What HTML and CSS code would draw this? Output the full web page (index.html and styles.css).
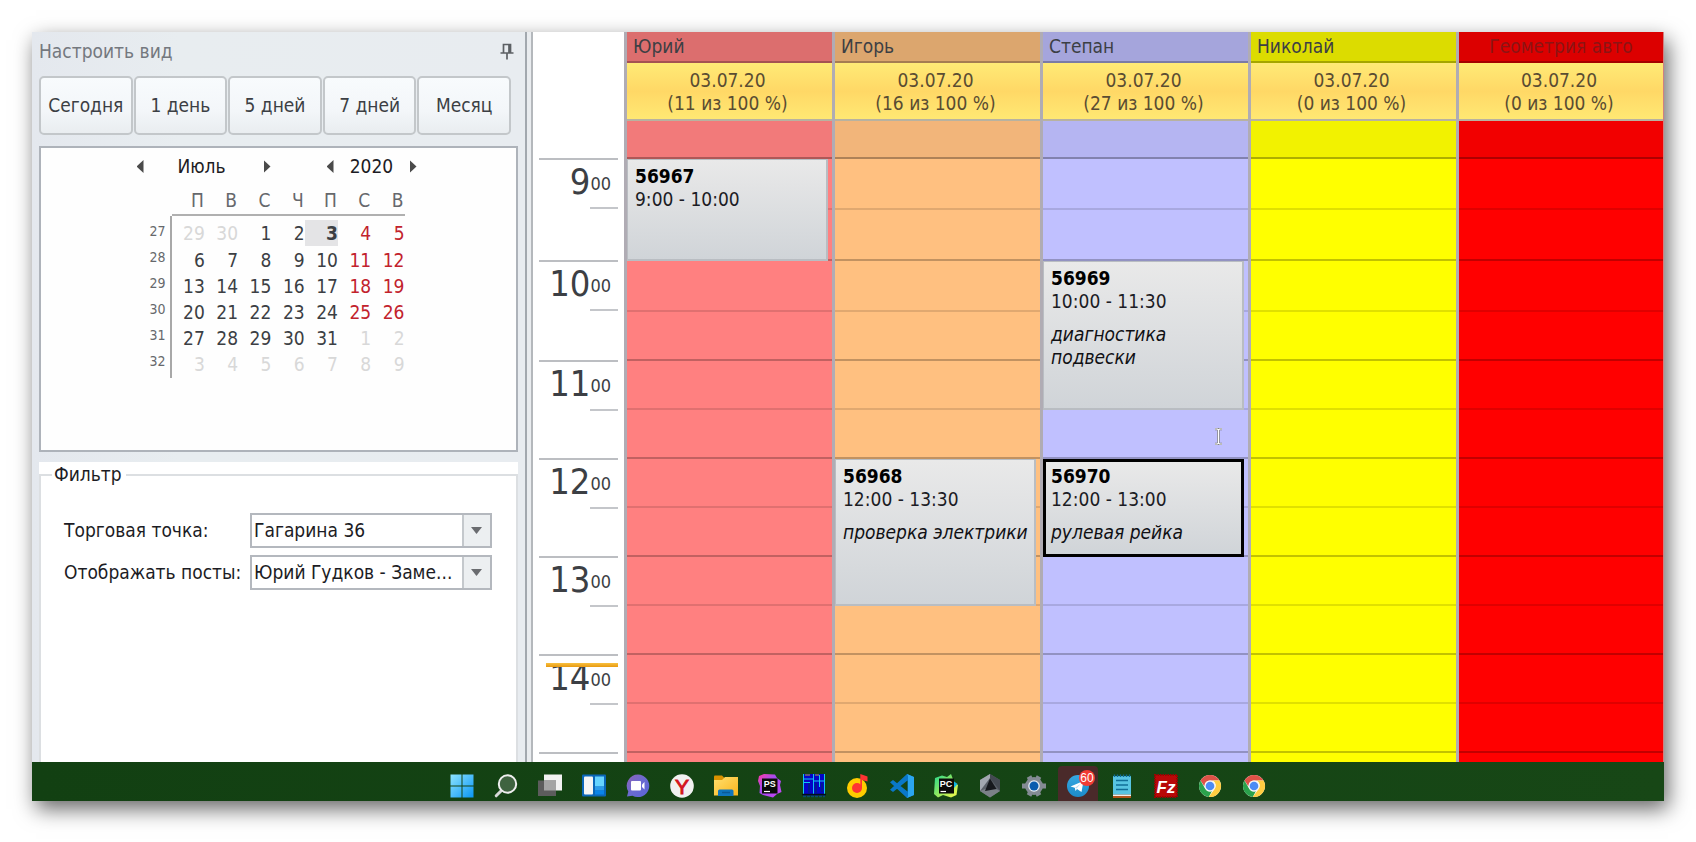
FILE: index.html
```html
<!DOCTYPE html>
<html lang="ru">
<head>
<meta charset="utf-8">
<title>Расписание постов</title>
<link rel="stylesheet" href="styles.css">
</head>
<body>
<div class="window">
  <main class="workspace">
    <aside class="sidebar">
      <header class="sidebar-head">
        <h1 class="sidebar-title">Настроить вид</h1>
        <button class="pin" type="button" aria-label="Закрепить">
          <svg width="14" height="17" viewBox="0 0 14 17"><path d="M3.500 9.500V1.500H10.500V9.500M9 2V9.500M0.500 10H13.500M7 10V16.500" fill="none" stroke="#5c6064" stroke-width="1.700"/></svg>
        </button>
      </header>
      <nav class="ranges">
        <button class="range" type="button">Сегодня</button>
        <button class="range" type="button">1 день</button>
        <button class="range" type="button">5 дней</button>
        <button class="range" type="button">7 дней</button>
        <button class="range" type="button">Месяц</button>
      </nav>
      <section class="calendar">
        <div class="calendar-nav">
          <div class="stepper stepper-month">
            <button class="arrow arrow-prev" type="button" aria-label="Предыдущий месяц"></button>
            <span>Июль</span>
            <button class="arrow arrow-next" type="button" aria-label="Следующий месяц"></button>
          </div>
          <div class="stepper stepper-year">
            <button class="arrow arrow-prev" type="button" aria-label="Предыдущий год"></button>
            <span>2020</span>
            <button class="arrow arrow-next" type="button" aria-label="Следующий год"></button>
          </div>
        </div>
        <table class="month">
          <thead><tr><td></td><th>П</th><th>В</th><th>С</th><th>Ч</th><th>П</th><th>С</th><th>В</th></tr></thead>
          <tbody>
            <tr><th>27</th><td class="out">29</td><td class="out">30</td><td>1</td><td>2</td><td class="today">3</td><td class="rest">4</td><td class="rest">5</td></tr>
            <tr><th>28</th><td>6</td><td>7</td><td>8</td><td>9</td><td>10</td><td class="rest">11</td><td class="rest">12</td></tr>
            <tr><th>29</th><td>13</td><td>14</td><td>15</td><td>16</td><td>17</td><td class="rest">18</td><td class="rest">19</td></tr>
            <tr><th>30</th><td>20</td><td>21</td><td>22</td><td>23</td><td>24</td><td class="rest">25</td><td class="rest">26</td></tr>
            <tr><th>31</th><td>27</td><td>28</td><td>29</td><td>30</td><td>31</td><td class="out">1</td><td class="out">2</td></tr>
            <tr><th>32</th><td class="out">3</td><td class="out">4</td><td class="out">5</td><td class="out">6</td><td class="out">7</td><td class="out">8</td><td class="out">9</td></tr>
          </tbody>
        </table>
      </section>
      <section class="filter">
        <fieldset class="filter-box">
          <legend>Фильтр</legend>
          <div class="fields">
            <label for="shop">Торговая точка:</label>
            <div class="combo"><select id="shop"><option>Гагарина 36</option></select></div>
            <label for="posts">Отображать посты:</label>
            <div class="combo"><select id="posts"><option>Юрий Гудков - Заме...</option></select></div>
          </div>
        </fieldset>
      </section>
    </aside>
    <div class="splitter"></div>
    <div class="ruler">
      <div class="hour h9"><span>9</span><small>00</small></div>
      <div class="hour h10"><span>10</span><small>00</small></div>
      <div class="hour"><span>11</span><small>00</small></div>
      <div class="hour"><span>12</span><small>00</small></div>
      <div class="hour"><span>13</span><small>00</small></div>
      <div class="hour now"><span>14</span><small>00</small></div>
      <div class="hour"><span>15</span><small>00</small></div>
    </div>
    <div class="posts">
      <section class="post post-rose">
        <h2 class="post-name">Юрий</h2>
        <div class="post-date">03.07.20<br>(11 из 100 %)</div>
        <div class="allday"></div>
        <div class="slots">
          <i></i><i></i><i></i><i></i><i></i><i></i><i></i><i></i><i></i><i></i><i></i><i></i><i></i>
          <article class="job job-9-10"><b>56967</b><span>9:00 - 10:00</span></article>
        </div>
      </section>
      <section class="post post-peach">
        <h2 class="post-name">Игорь</h2>
        <div class="post-date">03.07.20<br>(16 из 100 %)</div>
        <div class="allday"></div>
        <div class="slots">
          <i></i><i></i><i></i><i></i><i></i><i></i><i></i><i></i><i></i><i></i><i></i><i></i><i></i>
          <article class="job job-12-1330"><b>56968</b><span>12:00 - 13:30</span><em>проверка электрики</em></article>
        </div>
      </section>
      <section class="post post-lilac">
        <h2 class="post-name">Степан</h2>
        <div class="post-date">03.07.20<br>(27 из 100 %)</div>
        <div class="allday"></div>
        <div class="slots">
          <i></i><i></i><i></i><i></i><i></i><i class="hovered"><svg width="9" height="17" viewBox="0 0 9 17"><path d="M1 1H3.500L4.500 2L5.500 1H8M4.500 2V15M1 16H3.500L4.500 15L5.500 16H8" fill="none" stroke="#777" stroke-width="2.500"/><path d="M1 1H3.500L4.500 2L5.500 1H8M4.500 2V15M1 16H3.500L4.500 15L5.500 16H8" fill="none" stroke="#fff" stroke-width="1.200"/></svg></i><i></i><i></i><i></i><i></i><i></i><i></i><i></i>
          <article class="job job-10-1130"><b>56969</b><span>10:00 - 11:30</span><em>диагностика подвески</em></article>
          <article class="job job-12-13 selected"><b>56970</b><span>12:00 - 13:00</span><em>рулевая рейка</em></article>
        </div>
      </section>
      <section class="post post-yellow">
        <h2 class="post-name">Николай</h2>
        <div class="post-date">03.07.20<br>(0 из 100 %)</div>
        <div class="allday"></div>
        <div class="slots">
          <i></i><i></i><i></i><i></i><i></i><i></i><i></i><i></i><i></i><i></i><i></i><i></i><i></i>
        </div>
      </section>
      <section class="post post-red">
        <h2 class="post-name">Геометрия авто</h2>
        <div class="post-date">03.07.20<br>(0 из 100 %)</div>
        <div class="allday"></div>
        <div class="slots">
          <i></i><i></i><i></i><i></i><i></i><i></i><i></i><i></i><i></i><i></i><i></i><i></i><i></i>
        </div>
      </section>
    </div>
  </main>

  <footer class="taskbar">
    <svg width="0" height="0" class="defs">
      <defs>
        <linearGradient id="win" x1="0" y1="0" x2="1" y2="1"><stop offset="0" stop-color="#8ee4ff"/><stop offset="1" stop-color="#0a96f5"/></linearGradient>
        <linearGradient id="chat" x1="0" y1="0" x2="1" y2="1"><stop offset="0" stop-color="#8d62b8"/><stop offset=".5" stop-color="#6a6bd0"/><stop offset="1" stop-color="#5a62d8"/></linearGradient>
        <linearGradient id="dir" x1="0" y1="0" x2="1" y2="1"><stop offset="0" stop-color="#ffdf6e"/><stop offset="1" stop-color="#f9b51c"/></linearGradient>
        <linearGradient id="ps" x1="0" y1="0" x2="1" y2="1"><stop offset="0" stop-color="#ff3aa0"/><stop offset=".4" stop-color="#a44cf0"/><stop offset="1" stop-color="#c845f5"/></linearGradient>
        <linearGradient id="pc" x1="0" y1="0" x2="1" y2="1"><stop offset="0" stop-color="#22d88f"/><stop offset=".5" stop-color="#8ee860"/><stop offset="1" stop-color="#fcf84a"/></linearGradient>
        <linearGradient id="tg" x1="0" y1="0" x2="0" y2="1"><stop offset="0" stop-color="#36a9e2"/><stop offset="1" stop-color="#1c8bc9"/></linearGradient>
        <symbol id="chrome" viewBox="0 0 24 24">
          <circle cx="12" cy="12" r="11" fill="#fff"/>
          <path d="M2.500 6.500A11 11 0 0 1 21.500 6.500H12A5.500 5.500 0 0 0 7 9.500L6.500 12.500Z" fill="#df5247"/>
          <path d="M2.500 6.500L7.200 14.700A5.500 5.500 0 0 0 14 17L10.800 23A11 11 0 0 1 2.500 6.500Z" fill="#2ba24c"/>
          <path d="M21.500 6.500A11 11 0 0 1 10.800 23L16.500 15A5.500 5.500 0 0 0 14.500 6.500Z" fill="#ffcd42"/>
          <circle cx="12" cy="12" r="5.500" fill="#f4f4f4"/><circle cx="12" cy="12" r="4.300" fill="#4c8bf5"/>
        </symbol>
      </defs>
    </svg>
    <button class="app" type="button" aria-label="Пуск"><svg viewBox="0 0 24 24"><path d="M.500 .500H11.500V11.500H.500ZM12.500 .500H23.500V11.500H12.500ZM.500 12.500H11.500V23.500H.500ZM12.500 12.500H23.500V23.500H12.500Z" fill="url(#win)"/></svg></button>
    <button class="app" type="button" aria-label="Поиск"><svg viewBox="0 0 24 24"><path d="M8 16L2.200 21.800" stroke="#d8d8d8" stroke-width="3" stroke-linecap="round"/><circle cx="13.500" cy="10" r="8.700" fill="#3f6340" stroke="#eee" stroke-width="2"/></svg></button>
    <button class="app" type="button" aria-label="Представление задач"><svg viewBox="0 0 24 24"><path d="M6 .500H24V16.500H6Z" fill="#f2f2f2"/><path d="M0 6.500H18V22H0Z" fill="#5c5c5c"/><path d="M6 6.500H18V16.500H6Z" fill="#a4a4a4"/></svg></button>
    <button class="app" type="button" aria-label="Виджеты"><svg viewBox="0 0 24 24"><rect y=".500" width="24" height="22" rx="1" fill="#0a66b8"/><rect x="2" y="2.500" width="9" height="18" rx="1" fill="#f4f4f4"/><path d="M13 2.500H22V12.500H13Z" fill="#66d4ff"/><path d="M13 12.500H22V16.500H13Z" fill="#2b9bea"/><path d="M13 16.500H22V20.500H13Z" fill="#0a84e8"/></svg></button>
    <button class="app" type="button" aria-label="Чат"><svg viewBox="0 0 24 24"><path d="M12 .500A11.300 11.300 0 1 1 6.500 21.700L1 22.500L2.300 17.500A11.300 11.300 0 0 1 12 .500Z" fill="url(#chat)"/><rect x="5" y="7" width="10" height="9.500" rx="1" fill="#fff"/><path d="M16 10.500L18.500 8V15.500L16 13Z" fill="#fff"/></svg></button>
    <button class="app" type="button" aria-label="Яндекс Браузер"><svg viewBox="0 0 24 24"><circle cx="12" cy="12" r="11.800" fill="#f1f1f1"/><text x="12" y="20" class="glyph glyph-y">Y</text></svg></button>
    <button class="app" type="button" aria-label="Проводник"><svg viewBox="0 0 24 24"><path d="M0 4V2.500Q0 1.500 1 1.500H8L10.500 4V6H0Z" fill="#d99200"/><path d="M0 6H8L11 3H24V21.500H0Z" fill="url(#dir)"/><path d="M4 22V17Q4 15.500 5.500 15.500H18Q19.500 15.500 19.500 17V22Z" fill="#0f75bd"/><path d="M8 18.500H16" stroke="#0a5a98" stroke-width="1.500"/></svg></button>
    <button class="app" type="button" aria-label="PhpStorm"><svg viewBox="0 0 24 24"><path d="M1 2L6 0L17 .500L19 4L23 7L22 11L23.500 18L19 20L15 23.500L5 21L1.500 19L2 12L0 7Z" fill="url(#ps)"/><rect x="4" y="4.500" width="15.500" height="15" fill="#0a0a0a"/><path d="M6 17.500H12" stroke="#fff" stroke-width="1.200"/><text x="11.700" y="12.700" class="glyph glyph-ide">PS</text></svg></button>
    <button class="app" type="button" aria-label="Монитор"><svg viewBox="0 0 24 24"><rect x="1" y="0" width="22" height="21.500" fill="#0404c8"/><path d="M1.500 0V21M11.500 0V21M22.500 0V21M1 5H11M12 7H23M1 8.500H8M17.500 1V13" stroke="#12c6ee" stroke-width="1"/><path d="M7 9V19M14 9V19M20 9V18" stroke="#001a90" stroke-width="2"/><path d="M3 1H8M13 1H17" stroke="#b6a72c" stroke-width="1"/><path d="M0 20.500H24" stroke="#021018" stroke-width="1.500"/><path d="M1 22.500H23" stroke="#08506a" stroke-width="1.500" stroke-dasharray="3 1"/></svg></button>
    <button class="app" type="button" aria-label="Музыка"><svg viewBox="0 0 24 24"><circle cx="11" cy="14" r="10" fill="#ffcc00"/><circle cx="11" cy="14" r="5" fill="#ff3333"/><path d="M14.300 14V0L21.500 2.500V7.500L16 6V14Z" fill="#ff3333"/></svg></button>
    <button class="app" type="button" aria-label="VS Code"><svg viewBox="0 0 24 24"><path d="M17.500 6.500L3 18L0 15.800L17 0L24 3V21L17 24L0 8.200L3 6L17.500 17.500Z" fill="#0a78c8"/><path d="M17 0L24 3V21L17 24L18 22V2Z" fill="#2ba6f0"/></svg></button>
    <button class="app" type="button" aria-label="PyCharm"><svg viewBox="0 0 24 24"><path d="M1 4L8 1.500L13 3L17 0L18.500 4L20 8L24 11L22.500 21L17 23.500L9 21L4 23.500L0 20Z" fill="url(#pc)"/><path d="M19.500 7L23.500 10L20 14Z" fill="#10b4e0"/><rect x="5" y="4.500" width="15" height="15" fill="#0a0a0a"/><path d="M6.500 17.500H12" stroke="#fff" stroke-width="1.200"/><text x="12" y="12.700" class="glyph glyph-ide">PC</text></svg></button>
    <button class="app" type="button" aria-label="Куб"><svg viewBox="0 0 24 24"><path d="M12 0L22 6V17L12 23.500L2 17V6Z" fill="#5a6068"/><path d="M12 0L2 6V17L12 4Z" fill="#a2a8b0"/><path d="M12 0L22 6V17L12 4Z" fill="#444a52"/><path d="M2 17L12 23.500L22 17L18 15H7Z" fill="#7b8188"/><path d="M12 4.500L18.500 15L7 17Z" fill="#16191d"/></svg></button>
    <button class="app" type="button" aria-label="Параметры"><svg viewBox="0 0 24 24"><circle cx="12" cy="12" r="9" fill="#848b94"/><path d="M7 2.500L17 21.500M17 2.500L7 21.500M0 12H24" stroke="#848b94" stroke-width="5"/><circle cx="12" cy="12" r="5.800" fill="#e8eef4"/><circle cx="12" cy="12" r="4.500" fill="#0a5cae"/></svg></button>
    <button class="app app-alert" type="button" aria-label="Telegram"><svg viewBox="0 0 24 24"><circle cx="12" cy="12" r="11" fill="url(#tg)"/><path d="M4.500 12.500L17.500 7L15.500 18L11 15L9.500 17L8.800 13.800Z" fill="#fff"/><path d="M9 13.800L15 9.500L10.500 14.500Z" fill="#b9dcf0"/></svg><span class="badge">60</span></button>
    <button class="app" type="button" aria-label="Блокнот"><svg viewBox="0 0 24 24"><path d="M3 20H21V24H3Z" fill="#b4561c"/><path d="M3 20.500H21V22H3Z" fill="#f0f0f0"/><path d="M3 2H21V20.500H3Z" fill="#57c4e2"/><path d="M4.500 .500V3M7.500 .500V3M10.500 .500V3M13.500 .500V3M16.500 .500V3M19.500 .500V3" stroke="#0e6a94" stroke-width="1.500"/><path d="M6 6.500H18M6 11H18M6 15.500H18" stroke="#106e98" stroke-width="1.700"/></svg></button>
    <button class="app" type="button" aria-label="FileZilla"><svg viewBox="0 0 24 24"><rect x="1" y="1" width="22" height="22" fill="#b80808" stroke="#a00000" stroke-width="2" stroke-dasharray="1.500 1"/><text x="12" y="19" class="glyph glyph-fz">Fz</text></svg></button>
    <button class="app" type="button" aria-label="Chrome"><svg viewBox="0 0 24 24"><use href="#chrome"/></svg></button>
    <button class="app" type="button" aria-label="Chrome"><svg viewBox="0 0 24 24"><use href="#chrome"/></svg></button>
  </footer>
</div>
</body>
</html>
```

FILE: styles.css
```css
* { box-sizing: border-box; }

body {
  margin: 0;
  height: 100vh;
  padding: 32px 32px 41px;
  background: #fff;
  font: 19px/23px "DejaVu Sans Condensed", "DejaVu Sans", sans-serif;
  color: #3c3f44;
}

button {
  font: inherit;
  color: inherit;
  border: 0;
  padding: 0;
  background: none;
}

.window {
  height: 100%;
  display: flex;
  flex-direction: column;
  box-shadow: 4px 8px 20px 0 rgba(0, 0, 0, .6);
}

.workspace {
  flex: 1;
  min-height: 0;
  overflow: hidden;
  display: grid;
  grid-template-columns: 493px 8px 91px 1fr;
  background: #fff;
}

/* Sidebar */
.sidebar {
  display: flex;
  flex-direction: column;
  min-height: 0;
  padding: 0 7px;
  background: linear-gradient(90deg, #e4e8ee, #e8edf0 30%, #e8ecf0);
}

.sidebar-head {
  display: flex;
  justify-content: space-between;
  align-items: center;
  height: 44px;
  padding: 0 4px 6px 0;
}

.sidebar-title {
  margin: 0;
  font-size: 19px;
  font-weight: 400;
  color: #74787e;
}

.pin { display: flex; }

.ranges {
  display: grid;
  grid-template-columns: repeat(5, 1fr);
  gap: 1px;
  margin-right: 7px;
}

.range {
  height: 59px;
  border: 2px solid #c3c7ca;
  border-radius: 5px;
  background: linear-gradient(#f8fbfd, #f3f6f9 60%, #e9edf0);
  white-space: nowrap;
}

.calendar {
  height: 306px;
  margin-top: 11px;
  border: 2px solid #aeb3ba;
  background: #fefefe;
  display: flex;
  flex-direction: column;
  align-items: center;
  padding: 7px 4px 0 0;
}

.calendar-nav {
  display: flex;
  justify-content: space-between;
  width: 280px;
  color: #1c1c24;
}

.stepper {
  display: flex;
  align-items: center;
  justify-content: space-between;
}

.stepper-month { width: 134px; }
.stepper-month span { margin-right: 4px; }
.stepper-year { width: 90px; }

.arrow {
  width: 7px;
  height: 13px;
  background: #4a4a4a;
}

.arrow-prev { clip-path: polygon(100% 0, 100% 100%, 0 50%); }
.arrow-next { clip-path: polygon(0 0, 100% 50%, 0 100%); }

.month {
  border-collapse: separate;
  border-spacing: 0;
  table-layout: fixed;
  width: 262px;
  margin-top: 10px;
  margin-right: 6px;
}

.month td,
.month th {
  height: 26px;
  padding: 0 0 2px;
  font-weight: 400;
  text-align: right;
}

.month thead td { width: 29px; }

.month thead th {
  height: 28px;
  padding: 0 1px 3px 0;
  border-bottom: 2px solid #b0b0b0;
  line-height: 20px;
  color: #66686c;
}

.month tbody th {
  padding: 2px 4px 0 0;
  border-right: 2px solid #a8a8a8;
  font-size: 14px;
  line-height: 14px;
  vertical-align: top;
  color: #66686c;
}

.month tbody tr:first-child td { height: 32px; padding-top: 4px; }
.month tbody tr:first-child th { height: 32px; padding-top: 8px; }

.month .out { color: #d8d8d8; }
.month .rest { color: #c2222c; }

.month .today {
  font-weight: 700;
  background: linear-gradient(#e4e4e6, #e4e4e6) 0 4px / 100% 26px no-repeat;
}

.filter {
  flex: 1;
  display: flex;
  margin-top: 10px;
  background: #fff;
}

.filter-box {
  flex: 1;
  min-width: 0;
  margin: 1px 0 0;
  padding: 27px 24px 0 23px;
  border: 2px solid #dcdfe2;
  border-bottom: 0;
}

.filter-box legend {
  margin-left: -12px;
  padding: 0 4px 0 2px;
  color: #1c1c24;
}

.fields {
  display: grid;
  grid-template-columns: 186px 1fr;
  row-gap: 7px;
  align-items: center;
  color: #1c1c24;
}

.fields label { white-space: nowrap; }

.combo {
  position: relative;
  border: 2px solid #b4b8be;
  background: #fff;
}

.combo select {
  display: block;
  width: 100%;
  height: 31px;
  padding: 0 28px 0 2px;
  border: 0;
  appearance: none;
  font: inherit;
  color: inherit;
  background: linear-gradient(90deg, #c4c8cc 2px, #eceff1 2px) right / 28px 100% no-repeat;
}

.combo::after {
  content: "";
  position: absolute;
  right: 8px;
  top: 12px;
  width: 11px;
  height: 7px;
  background: #6a6c70;
  clip-path: polygon(0 0, 100% 0, 50% 100%);
  pointer-events: none;
}

.splitter {
  border-left: 2px solid #a2a8ae;
  border-right: 2px solid #b4b8bc;
  background: #e9ecef;
}

/* Hours */
.ruler {
  padding: 126px 6px 0;
  overflow: hidden;
}

.hour {
  position: relative;
  display: flex;
  align-items: baseline;
  justify-content: flex-end;
  height: 98px;
  border-top: 2px solid #bcbec2;
  padding-right: 7px;
  line-height: 44px;
}

.h9 { height: 102px; }
.h10 { height: 100px; }

.hour span { font-size: 36px; }
.hour small { font-size: 18px; align-self: flex-start; line-height: 48px; }

.hour::before {
  content: "";
  position: absolute;
  right: 0;
  top: 47px;
  width: 28px;
  border-top: 2px solid #c4c6ca;
}

.now::after {
  content: "";
  position: absolute;
  left: 7px;
  right: 0;
  top: 7px;
  height: 4px;
  background: linear-gradient(#f8c040, #e89a10);
}

/* Posts */
.posts {
  display: grid;
  grid-template-columns: repeat(5, 1fr);
  overflow: hidden;
}

.post {
  min-width: 0;
  border-left: 3px solid #b0acb4;
}

.post:last-child { border-right: 1px solid #d08080; }

.post-name {
  height: 31px;
  margin: 0;
  padding: 3px 0 0 6px;
  border-bottom: 2px solid rgba(0, 0, 0, .25);
  background: var(--head);
  font-size: 19px;
  font-weight: 400;
}

.post-date {
  height: 58px;
  padding: 6px 4px 0 0;
  border-bottom: 2px solid #b8b2a0;
  background: linear-gradient(#ffea76, #ffd866 50%, #ffe873);
  text-align: center;
  color: #5a4c32;
}

.allday {
  height: 38px;
  border-bottom: 2px solid rgba(0, 0, 0, .28);
  background: var(--allday);
}

.slots {
  display: grid;
  grid-template-columns: 1fr 4px;
  grid-template-rows: 51px 51px 51px repeat(10, 49px);
  background: var(--slot);
}

.slots i {
  grid-column: 1 / 3;
  border-bottom: 2px solid rgba(0, 0, 0, .12);
}

.slots i:nth-child(1) { grid-row: 1; }
.slots i:nth-child(2) { grid-row: 2; }
.slots i:nth-child(3) { grid-row: 3; }
.slots i:nth-child(4) { grid-row: 4; }
.slots i:nth-child(5) { grid-row: 5; }
.slots i:nth-child(6) { grid-row: 6; }
.slots i:nth-child(7) { grid-row: 7; }
.slots i:nth-child(8) { grid-row: 8; }
.slots i:nth-child(9) { grid-row: 9; }
.slots i:nth-child(10) { grid-row: 10; }
.slots i:nth-child(11) { grid-row: 11; }
.slots i:nth-child(12) { grid-row: 12; }
.slots i:nth-child(13) { grid-row: 13; }
.slots i:nth-child(2n) { border-bottom-color: rgba(0, 0, 0, .24); }

.hovered {
  display: flex;
  justify-content: flex-end;
  align-items: center;
  padding: 6px 25px 0 0;
}

.post-rose { --head: #dc6e6e; --allday: #f27a7a; --slot: #ff8080; }
.post-peach { --head: #dca66e; --allday: #f2b57a; --slot: #ffc080; }
.post-lilac { --head: #a5a5dc; --allday: #b5b5f2; --slot: #c0c0ff; }
.post-yellow { --head: #dcdc00; --allday: #f2f200; --slot: #ffff00; }
.post-red { --head: #dc0000; --allday: #f20000; --slot: #ff0000; }

.post-red .post-name {
  padding-left: 0;
  text-align: center;
  color: #8c1414;
}

.job {
  grid-column: 1;
  z-index: 1;
  display: flex;
  flex-direction: column;
  padding: 5px 0 0 7px;
  border: solid #b9bdc2;
  border-width: 1px 2px 2px 1px;
  background: linear-gradient(#e9e9e9, #d0d4d8);
  color: #1c1c24;
}

.job b { color: #000; }

.job em {
  margin-top: 10px;
  color: #101014;
}

.job-9-10 { grid-row: 1 / 3; }
.job-10-1130 { grid-row: 3 / 6; }
.job-12-13 { grid-row: 7 / 9; }
.job-12-1330 { grid-row: 7 / 10; }

.selected {
  border: 3px solid #000;
  padding: 3px 0 0 5px;
}

/* Taskbar */
.taskbar {
  display: flex;
  justify-content: center;
  height: 39px;
  padding: 4px 0 0 20px;
  background: linear-gradient(90deg, #124012, #174716);
}

.defs { position: absolute; }

.app {
  position: relative;
  width: 40px;
  height: 35px;
  margin: 0 2px;
}

.app svg {
  display: block;
  width: 24px;
  height: 24px;
  margin: 4px auto 0;
}

.app-alert {
  border-radius: 4px 4px 0 0;
  background: #4a2a2a;
}

.badge {
  position: absolute;
  right: 3px;
  top: 4px;
  width: 16px;
  height: 16px;
  border-radius: 8px;
  background: #f23c34;
  color: #fff;
  font: 12px/16px "Liberation Sans", sans-serif;
  text-align: center;
}

.glyph {
  fill: #fff;
  text-anchor: middle;
  font-family: "Liberation Sans", sans-serif;
  font-weight: 700;
}

.glyph-y { fill: #d4141c; font-size: 21px; font-weight: 400; stroke: #d4141c; }
.glyph-ide { font-size: 9px; }
.glyph-fz { font-size: 17px; font-style: italic; }
```
